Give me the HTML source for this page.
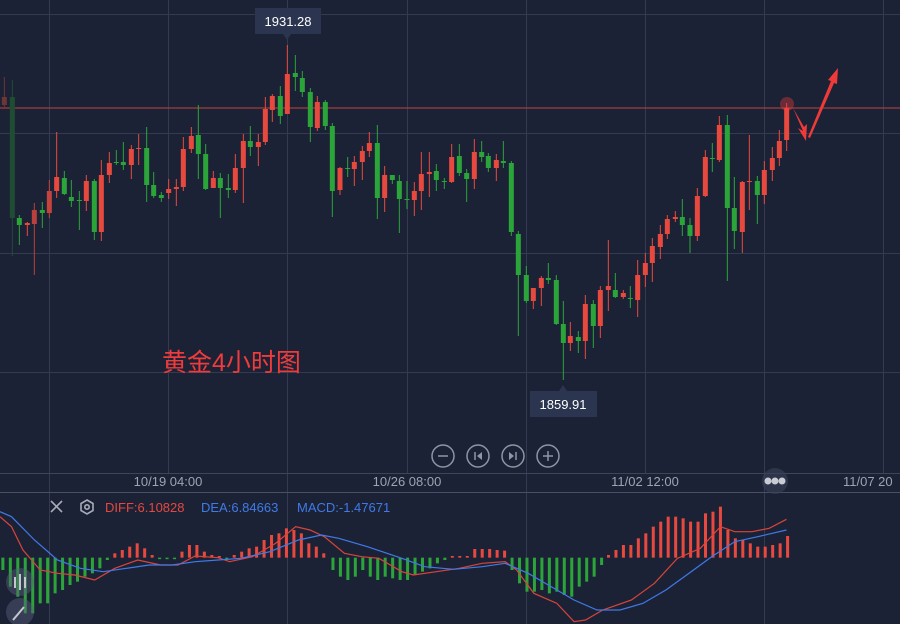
<!DOCTYPE html>
<html><head><meta charset="utf-8"><style>
html,body{margin:0;padding:0;background:#1c2235;width:900px;height:624px;overflow:hidden}
svg{display:block}
text{font-family:"Liberation Sans",sans-serif}
</style></head><body>
<svg id="s" width="900" height="624" xmlns="http://www.w3.org/2000/svg">
<rect width="900" height="624" fill="#1c2235"/>
<g stroke="#343b51" stroke-width="1">
<line x1="0" y1="14.5" x2="900" y2="14.5"/><line x1="0" y1="133.5" x2="900" y2="133.5"/>
<line x1="0" y1="253.5" x2="900" y2="253.5"/><line x1="0" y1="372.5" x2="900" y2="372.5"/>
<line x1="49.5" y1="0" x2="49.5" y2="624"/><line x1="168.5" y1="0" x2="168.5" y2="473"/>
<line x1="287.5" y1="0" x2="287.5" y2="624"/><line x1="407.5" y1="0" x2="407.5" y2="473"/>
<line x1="526.5" y1="0" x2="526.5" y2="624"/><line x1="645.5" y1="0" x2="645.5" y2="473"/>
<line x1="764.5" y1="0" x2="764.5" y2="624"/><line x1="883.5" y1="0" x2="883.5" y2="473"/>
</g>
<line x1="0" y1="473.5" x2="900" y2="473.5" stroke="#3e4559"/>
<line x1="0" y1="492.5" x2="900" y2="492.5" stroke="#4a5063"/>
<line x1="0" y1="108" x2="900" y2="108" stroke="#c0413d" stroke-width="1"/>
<g id="c"></g>
<circle cx="787" cy="104" r="7" fill="#ff3b3b" opacity="0.35"/>
<path d="M793,108 L803,131 L798,128 L806,141 L807,124 L804,127 Z" fill="#f03a3a"/>
<path d="M808,137 L831,81 L828,80 L838,68 L837,84 L834,83 L810,138 Z" fill="#f03a3a"/>
<g id="m"></g>
<text x="162" y="371" font-size="25" fill="#ef3b3b" font-family="'Liberation Sans','Noto Sans CJK SC',sans-serif">黄金4小时图</text>
<path d="M255,8 h66 v26 h-30 l-4,6 l-4,-6 h-28 z" fill="#2b3550"/>
<text x="288" y="26" font-size="13" fill="#fff" text-anchor="middle">1931.28</text>
<path d="M530,391 h29 l4,-6 l4,6 h30 v26 h-67 z" fill="#2b3550"/>
<text x="563" y="409" font-size="13" fill="#fff" text-anchor="middle">1859.91</text>
<g fill="none" stroke="#8f95a4" stroke-width="1.5">
<circle cx="443" cy="456" r="11"/><circle cx="478" cy="456" r="11"/><circle cx="513" cy="456" r="11"/><circle cx="548" cy="456" r="11"/>
<line x1="438" y1="456" x2="448" y2="456"/><line x1="543" y1="456" x2="553" y2="456"/><line x1="548" y1="451" x2="548" y2="461"/>
<line x1="475" y1="452" x2="475" y2="460"/><line x1="516" y1="452" x2="516" y2="460"/>
</g>
<path d="M482,452 L477,456 L482,460Z M509,452 L514,456 L509,460Z" fill="#8f95a4"/>
<g font-size="13" fill="#9ea3b1" text-anchor="middle">
<text x="168" y="486">10/19 04:00</text><text x="407" y="486">10/26 08:00</text><text x="645" y="486">11/02 12:00</text><text x="843" y="486" text-anchor="start">11/07 20</text>
</g>
<circle cx="775" cy="481" r="13" fill="#3a4156" opacity="0.6"/>
<g fill="#c9ccd4"><circle cx="768" cy="481" r="3.5"/><circle cx="775" cy="481" r="3.5"/><circle cx="782" cy="481" r="3.5"/></g>
<g stroke="#a7acb8" stroke-width="1.6" fill="none">
<line x1="51" y1="501" x2="62" y2="512"/><line x1="62" y1="501" x2="51" y2="512"/>
<path d="M87,500 L93,503.5 L93,510.5 L87,514 L81,510.5 L81,503.5Z"/><circle cx="87" cy="507" r="2.2"/>
</g>
<text x="105" y="512" font-size="13" fill="#e5483f">DIFF:6.10828</text>
<text x="201" y="512" font-size="13" fill="#3f7ae8">DEA:6.84663</text>
<text x="297" y="512" font-size="13" fill="#3f7ae8">MACD:-1.47671</text>
<circle cx="20" cy="582" r="14" fill="#59607a" opacity="0.45"/>
<circle cx="20" cy="612" r="14" fill="#59607a" opacity="0.45"/>
<g stroke="#c4c7d0" stroke-width="2"><line x1="15" y1="577" x2="15" y2="588"/><line x1="20" y1="574" x2="20" y2="590"/><line x1="25" y1="577" x2="25" y2="588"/><line x1="13" y1="620" x2="24" y2="607"/></g>
</svg>
<script>
var R="#e8493f",G="#2ba53a";
var d=[[13,97,105,77,108,"#6e3536"],[37,97,218,80,256,"#1f4d33"],[58,218,225,215,245,G],[82,223,225,222,236,R],[103,210,224,203,275,"#b9403c"],[127,210,213,202,228,G],[148,191,213,180,218,"#c4433d"],[170,177,191,132,198,R],[193,178,194,171,195,G],[214,197,201,180,207,G],[238,200,201,191,230,G],[259,181,201,175,211,R],[283,181,232,179,240,G],[304,175,232,160,241,R],[328,163,175,152,183,R],[349,162,163,150,165,G],[370,162,165,142,170,G],[394,149,165,145,179,R],[416,148,149,134,165,R],[440,148,185,127,202,G],[461,185,196,172,198,G],[484,195,198,192,202,G],[506,189,193,179,199,R],[529,187,189,179,206,R],[550,149,187,137,191,R],[574,136,149,127,153,R],[595,135,154,105,179,G],[617,154,189,144,190,G],[640,178,188,171,188,R],[661,178,188,173,218,G],[685,188,190,174,198,G],[706,168,190,154,193,R],[730,141,168,134,203,R],[751,141,147,126,156,G],[775,142,147,134,166,R],[796,109,142,97,145,R],[817,96,110,94,122,R],[841,96,116,86,124,G],[862,74,114,45,114,R],[886,73,77,55,91,G],[907,78,92,71,97,G],[931,92,127,88,142,G],[952,102,128,96,131,R],[976,102,126,100,130,G],[997,126,191,123,217,G],[1020,168,190,167,195,R],[1043,168,169,157,177,G],[1063,162,169,156,186,R],[1087,151,162,146,180,R],[1108,143,151,132,157,R],[1132,143,198,125,219,G],[1154,175,198,166,212,R],[1177,175,180,175,184,G],[1198,181,199,175,233,G],[1221,199,200,181,209,G],[1243,191,200,182,216,R],[1264,174,191,152,210,R],[1288,172,174,152,197,R],[1309,171,180,164,191,G],[1333,181,182,178,189,G]];
var h='';
function cd(x,t,b,hi,lo,c){h+='<line x1="'+x+'" x2="'+x+'" y1="'+hi+'" y2="'+lo+'" stroke="'+c+'" stroke-width="1"/>';
h+='<rect x="'+(x-2.5)+'" y="'+t+'" width="5" height="'+Math.max(1,b-t)+'" fill="'+c+'"/>';}
d.forEach(function(a){cd(a[0]/3,a[1],a[2],a[3],a[4],a[5]);});
var e=[[5,157,182,144,183,R],[28,156,173,144,176,G],[50,173,179,169,202,G],[73,152,179,139,189,R],[95,152,157,141,162,G],[115,156,168,153,172,G],[139,160,168,154,181,R],[160,161,163,141,168,G],[184,163,232,161,236,G],[205,234,275,231,336,G],[229,275,301,266,303,G],[250,288,301,288,309,R],[274,278,288,276,306,R],[295,278,280,263,284,G],[319,280,324,275,325,G],[340,324,343,301,380,G],[361,336,343,322,351,R],[385,337,341,331,353,G],[406,304,341,295,359,R],[430,304,326,300,348,G],[451,290,326,286,338,R],[475,286,290,240,311,R],[496,290,297,273,298,G],[520,293,297,290,299,R],[541,298,299,286,308,G],[563,275,300,260,317,R],[586,263,275,253,287,R],[607,246,263,238,282,R],[631,234,247,225,259,R],[652,219,234,215,239,R],[676,217,219,211,222,R],[697,217,225,199,236,G],[720,225,236,218,253,G],[742,196,236,188,241,R],[766,157,196,150,197,R],[787,158,159,143,172,G],[808,125,160,116,162,R],[832,125,208,115,281,G],[853,208,231,177,249,G],[877,182,232,181,253,R],[898,181,182,135,210,R],[922,181,195,176,224,G],[943,170,195,161,204,R],[967,158,170,147,181,R],[988,141,158,130,166,R],[1010,108,140,103,151,R]];
e.forEach(function(a){cd(450+a[0]/3,a[1],a[2],a[3],a[4],a[5]);});
document.getElementById('c').innerHTML=h;
var bars=[[5,420],[18,470],[31,500],[44,550],[57,550],[70,520],[83,520],[96,490],[109,480],[122,465],[135,455],[148,440],[161,430],[174,415],[187,390],[200,370],[213,360],[226,350],[239,340],[252,355],[265,375],[278,387],[291,387],[304,387],[317,365],[330,345],[343,345],[356,365],[369,375],[382,378],[395,387],[408,375],[421,365],[434,355],[447,350],[460,330],[473,315],[486,310],[499,295],[512,300],[525,310],[538,340],[551,350],[564,370],[580,420],[593,440],[606,450],[619,440],[632,420],[645,440],[658,450],[671,440],[684,445],[697,450],[710,450],[723,435],[736,425],[749,415],[762,400],[775,390],[788,378],[801,378],[814,378],[827,357],[840,357],[853,357],[866,360],[879,362],[892,420],[905,460],[918,485],[931,485],[944,480],[957,490],[970,485],[983,495],[996,500],[1009,470],[1022,455],[1035,440],[1048,405],[1060,375],[1073,360],[1086,345],[1099,345],[1112,325],[1125,310],[1138,290],[1151,275],[1164,260],[1177,260],[1190,265],[1203,275],[1216,275],[1229,250],[1242,245],[1255,230],[1268,300],[1281,325],[1294,330],[1307,340],[1320,350],[1333,350],[1346,345],[1359,340],[1372,318]];
var m='',base=430+383/3;
bars.forEach(function(b){var x=b[0]/1.742,y=430+b[1]/3;var t=Math.min(y,base),hh=Math.max(1.5,Math.abs(y-base));
m+='<rect x="'+(x-1.5)+'" y="'+t+'" width="3" height="'+hh+'" fill="'+(y<base?R:G)+'"/>';});
function pl(p,c){return '<polyline fill="none" stroke="'+c+'" stroke-width="1.2" points="'+p.map(function(q){return (q[0]/1.742)+','+(430+q[1]/3)}).join(' ')+'"/>';}
m+=pl([[0,260],[20,290],[40,360],[70,420],[100,430],[130,435],[165,450],[200,415],[240,390],[280,405],[310,405],[340,378],[380,383],[400,395],[440,380],[480,340],[515,290],[540,300],[565,320],[600,370],[630,380],[660,385],[700,425],[720,435],[760,425],[800,415],[840,400],[880,395],[900,420],[930,490],[970,520],[1000,575],[1020,570],[1050,540],[1100,510],[1140,460],[1180,385],[1220,355],[1255,290],[1280,305],[1310,305],[1340,295],[1370,268]],"#d9443a");
m+=pl([[0,245],[20,260],[60,330],[100,390],[140,415],[180,425],[220,415],[260,405],[300,405],[340,395],[380,390],[420,385],[470,365],[520,330],[560,315],[590,325],[640,350],[700,385],[740,410],[790,418],[840,410],[880,400],[920,430],[960,470],[1000,510],[1040,540],[1080,540],[1120,520],[1160,480],[1200,430],[1240,380],[1280,335],[1320,320],[1370,300]],"#3f7ae8");
document.getElementById('m').innerHTML=m;
</script>
</body></html>
